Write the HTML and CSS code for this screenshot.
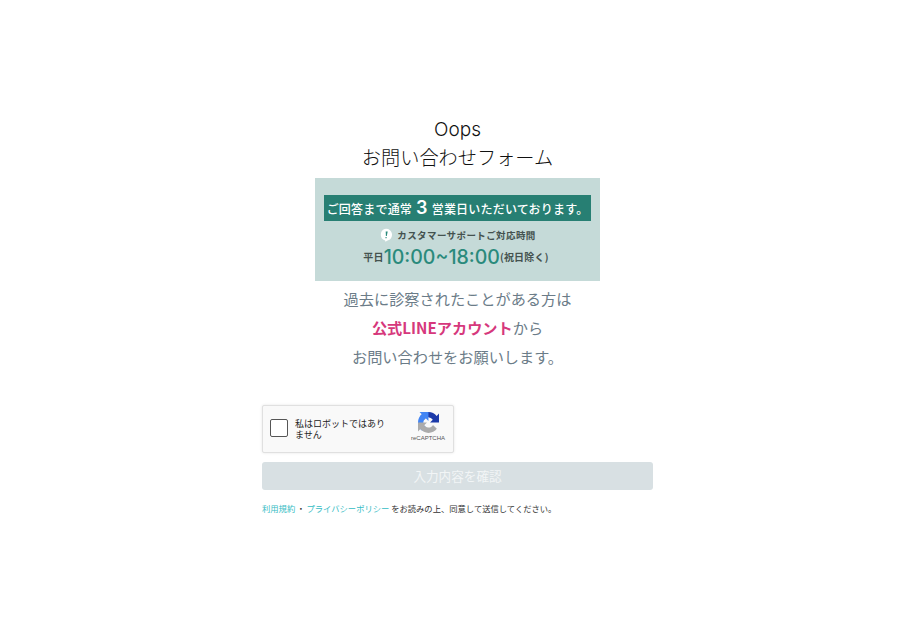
FILE: index.html
```html
<!DOCTYPE html>
<html lang="ja">
<head>
    <meta charset="UTF-8">
    <meta name="viewport" content="width=device-width, initial-scale=1.0">
    <title>お問い合わせフォーム</title>
    <link rel="stylesheet" href="styles.css">
</head>
<body>
    <div class="container">
        <div class="header">
            <h1 class="brand">Oops</h1>
            <h2 class="title">お問い合わせフォーム</h2>
        </div>

        <div class="notice">
            <div class="notice-bar">ご回答まで通常<span class="notice-days">3</span>営業日いただいております。</div>
            <div class="notice-label">
                <svg class="notice-icon" viewBox="0 0 14 14" width="14" height="14">
                    <path d="M7 .8a6 6 0 0 1 1.6 11.8L6.400 13.800l-.3-1.300A6 6 0 0 1 7 .8z" fill="#fff"/>
                    <path d="M6.700 3.400h2L7.800 8H6.900zM6.500 9h1.100v1.200H6.500z" fill="#2a8a7c"/>
                </svg>
                カスタマーサポートご対応時間
            </div>
            <div class="notice-hours">
                <span>平日</span><strong>10:00~18:00</strong><span>(祝日除く)</span>
            </div>
        </div>

        <div class="message">
            <p>過去に診察されたことがある方は</p>
            <p><a href="#" class="line-link">公式LINEアカウント</a>から</p>
            <p>お問い合わせをお願いします。</p>
        </div>

        <form class="contact-form">
            <div class="recaptcha">
                <span class="recaptcha-check"></span>
                <span class="recaptcha-label">私はロボットではありません</span>
                <div class="recaptcha-logo">
                    <svg viewBox="0 0 64 64" width="21" height="21">
                        <path d="M64 31.955l-.033-1.370V4.687l-7.160 7.160C50.948 4.674 42.033.093 32.050.093c-10.400 0-19.622 4.960-25.458 12.640l11.736 11.860a15.550 15.550 0 0 1 4.754-5.334c2.050-1.600 4.952-2.906 8.968-2.906.485 0 .86.057 1.135.163 4.976.393 9.288 3.140 11.828 7.124l-8.307 8.307L64 31.953" fill="#1c3aa9"/>
                        <path d="M31.862 0l-1.370.033H4.594l7.160 7.160C4.580 13.052 0 21.967 0 31.950c0 10.400 4.960 19.622 12.640 25.458l11.860-11.736a15.550 15.550 0 0 1-5.334-4.754c-1.600-2.050-2.906-4.952-2.906-8.968 0-.485.057-.86.163-1.135.393-4.976 3.140-9.288 7.124-11.828l8.307 8.307L31.860 0" fill="#4285f4"/>
                        <path d="M.001 31.955l.033 1.370v25.900l7.160-7.160c5.860 7.173 14.775 11.754 24.757 11.754 10.400 0 19.622-4.960 25.458-12.640l-11.736-11.860a15.550 15.550 0 0 1-4.754 5.334c-2.050 1.600-4.952 2.906-8.968 2.906-.485 0-.86-.057-1.135-.163-4.976-.393-9.288-3.140-11.828-7.124l8.307-8.307L0 31.953" fill="#ababab"/>
                    </svg>
                    <span>reCAPTCHA</span>
                </div>
            </div>

            <button type="button" class="submit-btn" disabled>入力内容を確認</button>

            <p class="terms"><a href="#">利用規約</a><span class="terms-dot">・</span><a href="#">プライバシーポリシー</a> をお読みの上、同意して送信してください。</p>
        </form>
    </div>
</body>
</html>
```

FILE: styles.css
```css
* {
    margin: 0;
    padding: 0;
    box-sizing: border-box;
}

body {
    font-family: 'Noto Sans CJK JP', 'Noto Sans', sans-serif;
    background: #fff;
    color: #111;
}

.container {
    width: 391px;
    margin: 0 auto;
    padding-top: 116px;
}

.header {
    text-align: center;
}

.brand {
    font-family: 'Inter', 'Noto Sans CJK JP', sans-serif;
    font-size: 19px;
    font-weight: 300;
    line-height: 28px;
}

.title {
    font-size: 19.200px;
    font-weight: 300;
    line-height: 27px;
}

.notice {
    width: 285px;
    height: 103px;
    margin: 7px auto 0;
    padding-top: 17px;
    background: #c5dad8;
    text-align: center;
    color: #44524f;
}

.notice-bar {
    display: flex;
    align-items: center;
    justify-content: center;
    width: 267px;
    height: 26px;
    margin: 0 auto;
    background: #277f73;
    color: #fff;
    font-size: 12px;
    font-weight: 500;
    letter-spacing: 0.2px;
    white-space: nowrap;
}

.notice-days {
    margin: 0 4px;
    font-family: 'Inter', sans-serif;
    font-size: 18px;
    font-weight: 600;
    line-height: 20px;
}

.notice-label {
    display: flex;
    align-items: center;
    justify-content: center;
    gap: 4px;
    margin-top: 6px;
    font-size: 9.500px;
    font-weight: 700;
    letter-spacing: 0.4px;
    line-height: 16px;
}

.notice-hours {
    display: flex;
    align-items: center;
    justify-content: center;
    margin-top: 2px;
    padding-right: 3px;
    font-size: 10px;
    font-weight: 700;
    letter-spacing: 0.2px;
    line-height: 24px;
}

.notice-hours strong {
    color: #2a8a7c;
    font-family: 'Inter', sans-serif;
    font-size: 19.500px;
    font-weight: 500;
    letter-spacing: 0;
}

.message {
    margin-top: 3px;
    text-align: center;
    color: #6b7c88;
    font-size: 15.200px;
    line-height: 29px;
}

.line-link {
    color: #d6387c;
    font-weight: 700;
    text-decoration: none;
}

.contact-form {
    margin-top: 34px;
}

.recaptcha {
    display: flex;
    align-items: center;
    width: 192px;
    height: 48px;
    background: #f9f9f9;
    border: 1px solid #e0e0e0;
    border-radius: 2px;
    box-shadow: 0 0 3px rgba(0,0,0,0.1);
}

.recaptcha-check {
    flex: none;
    width: 18px;
    height: 18px;
    margin-left: 7px;
    margin-bottom: 3px;
    background: #fff;
    border: 1.500px solid #555;
    border-radius: 2px;
}

.recaptcha-label {
    width: 94px;
    margin-left: 7px;
    font-size: 9px;
    line-height: 11px;
    color: #222;
}

.recaptcha-logo {
    display: flex;
    flex-direction: column;
    align-items: center;
    gap: 1px;
    width: 40px;
    margin-left: auto;
    margin-right: 5px;
    margin-bottom: 3px;
    font-family: 'Liberation Sans', sans-serif;
    font-size: 6px;
    line-height: 9px;
    color: #555;
}

.submit-btn {
    display: block;
    width: 100%;
    height: 28px;
    margin-top: 9px;
    padding-bottom: 2px;
    background: #d8e0e3;
    border: none;
    border-radius: 3px;
    color: #f2f5f6;
    font-family: inherit;
    font-size: 12.600px;
}

.terms {
    margin-top: 11px;
    font-size: 8.300px;
    line-height: 14px;
    color: #333;
}

.terms a {
    color: #35bcc4;
    text-decoration: none;
}

.terms-dot {
    margin: 0 1.500px;
}
```
